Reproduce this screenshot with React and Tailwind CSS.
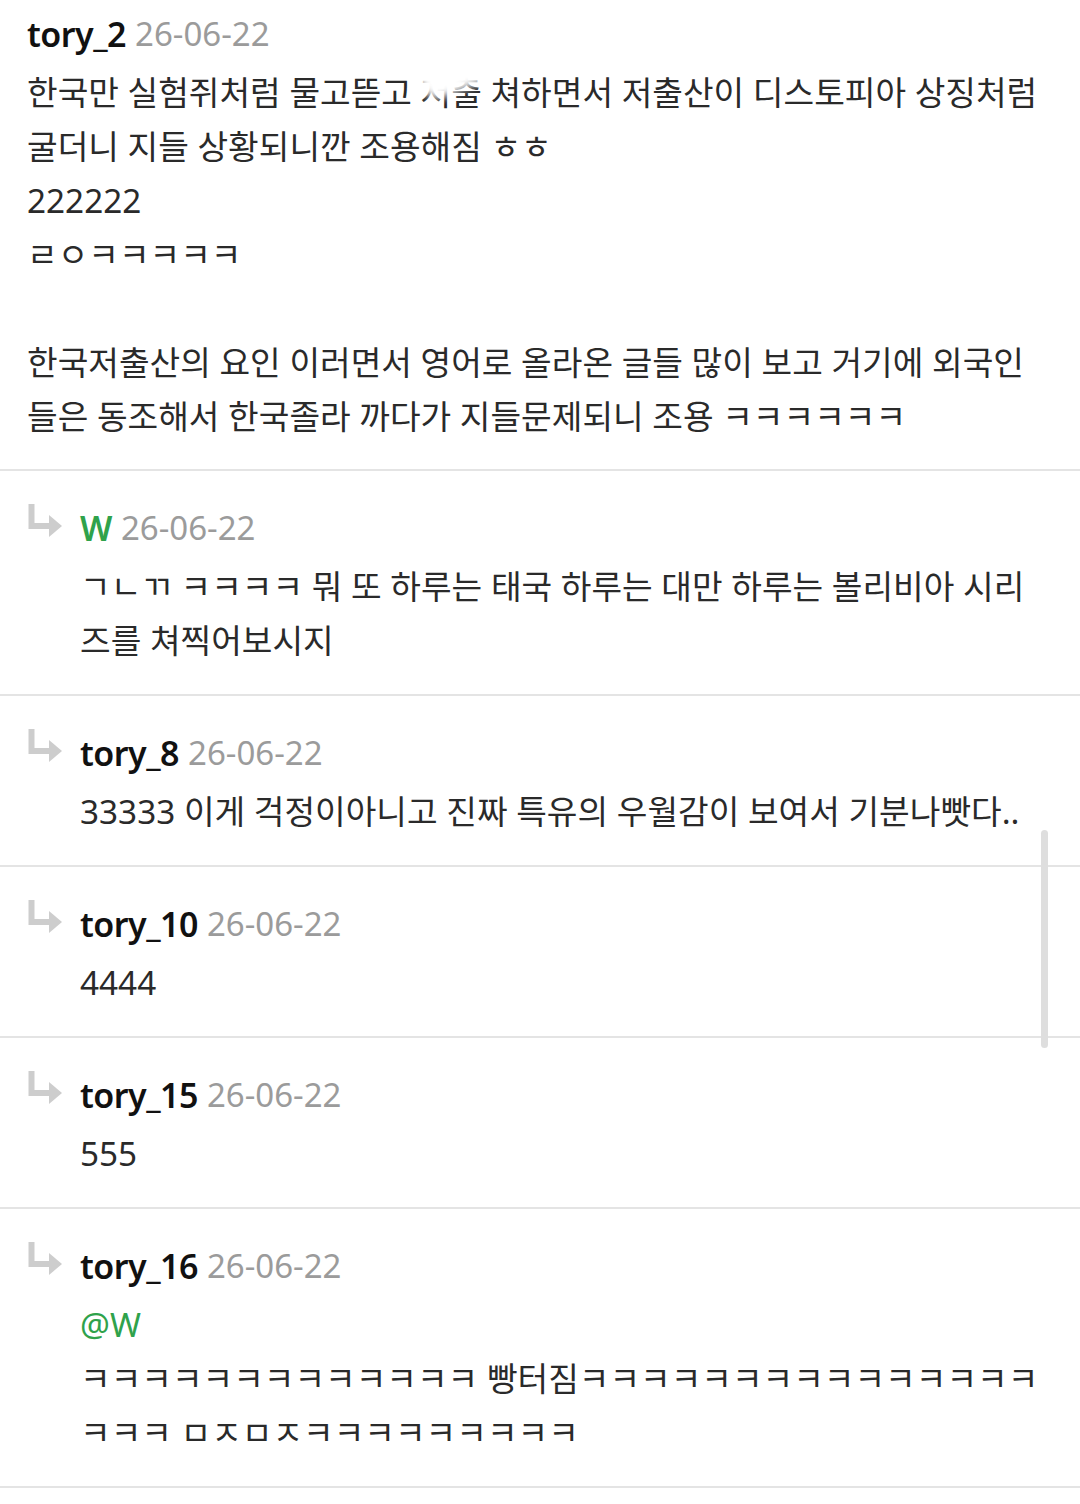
const replies = [
  {
    name: 'W',
    green: true,
    lines: ['ㄱㄴㄲ ㅋㅋㅋㅋ 뭐 또 하루는 태국 하루는 대만 하루는 볼리비아 시리', '즈를 쳐찍어보시지'],
  },
  {
    name: 'tory_8',
    lines: ['33333 이게 걱정이아니고 진짜 특유의 우월감이 보여서 기분나빳다..'],
  },
  { name: 'tory_10', lines: ['4444'] },
  { name: 'tory_15', lines: ['555'] },
  {
    name: 'tory_16',
    mention: '@W',
    lines: [
      'ㅋㅋㅋㅋㅋㅋㅋㅋㅋㅋㅋㅋㅋ 빵터짐ㅋㅋㅋㅋㅋㅋㅋㅋㅋㅋㅋㅋㅋㅋㅋ',
      'ㅋㅋㅋ ㅁㅈㅁㅈㅋㅋㅋㅋㅋㅋㅋㅋㅋ',
    ],
  },
];

const ReplyArrow = () => (
  <svg width="36" height="34" viewBox="0 0 36 34">
    <path d="M4.5 1 V23 H24" fill="none" stroke="#cdcdcd" strokeWidth="6" />
    <polygon points="22,12 35,23 22,34" fill="#cdcdcd" />
  </svg>
);

const Header = ({ name, green }) => (
  <div className="h-[62px] flex items-center gap-[9px] whitespace-nowrap">
    <span
      className={`text-[34px] font-semibold tracking-[-0.5px] ${green ? 'text-[#2fa24b]' : 'text-[#111111]'}`}
    >
      {name}
    </span>
    <span className="text-[33px] text-[#9b9b9b]">26-06-22</span>
  </div>
);

export default function App() {
  return (
    <div className="relative min-h-[1504px] bg-white font-['Noto_Sans','Noto_Sans_CJK_KR',sans-serif] text-[#2a2a2a]">
      {/* top comment */}
      <div className="relative px-[27px] pt-[3px] pb-[26px] border-b-2 border-[#e4e4e4]">
        <Header name="tory_2" />
        <div className="text-[33.3px] leading-[54px] whitespace-nowrap">
          <div>한국만 실험쥐처럼 물고뜯고 저출 쳐하면서 저출산이 디스토피아 상징처럼</div>
          <div>굴더니 지들 상황되니깐 조용해짐 ㅎㅎ</div>
          <div>222222</div>
          <div>ㄹㅇㅋㅋㅋㅋㅋ</div>
          <div>&nbsp;</div>
          <div>한국저출산의 요인 이러면서 영어로 올라온 글들 많이 보고 거기에 외국인</div>
          <div>들은 동조해서 한국졸라 까다가 지들문제되니 조용 ㅋㅋㅋㅋㅋㅋ</div>
        </div>
        {/* smudge over the hidden word */}
        <div className="absolute left-[418px] top-[54px] w-[80px] h-[36px] rounded-full bg-white blur-[4px] -rotate-[22deg]" />
      </div>

      {replies.map((r) => (
        <div key={r.name} className="flex px-[27px] pt-[26px] pb-[27px] border-b-2 border-[#e4e4e4]">
          <div className="w-[53px] shrink-0 pt-[6px]">
            <ReplyArrow />
          </div>
          <div className="min-w-0">
            <Header name={r.name} green={r.green} />
            <div className="text-[33.3px] leading-[54px] whitespace-nowrap">
              {r.mention && <div className="text-[#2fa24b]">{r.mention}</div>}
              {r.lines.map((l) => (
                <div key={l}>{l}</div>
              ))}
            </div>
          </div>
        </div>
      ))}

      {/* scrollbar thumb */}
      <div className="absolute left-[1041px] top-[830px] w-[7px] h-[218px] rounded-full bg-[#dedede]" />
    </div>
  );
}
